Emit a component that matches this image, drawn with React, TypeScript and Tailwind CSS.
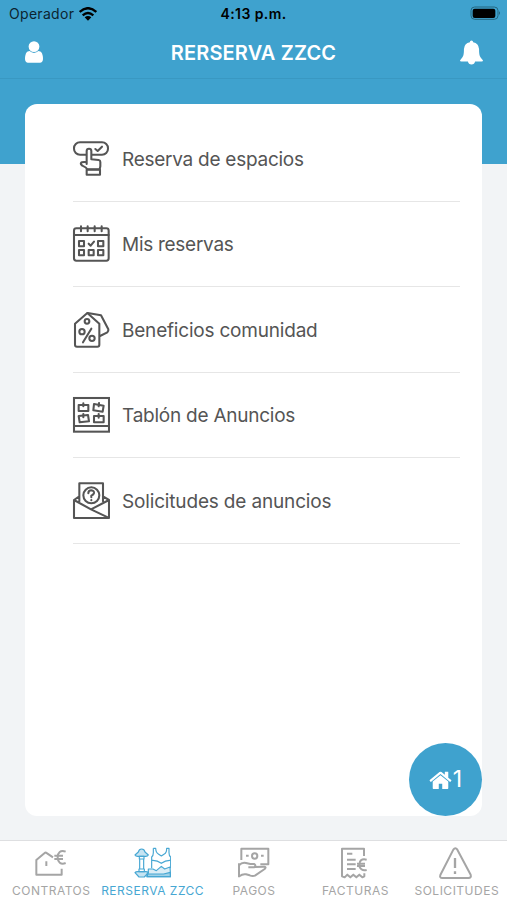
import type { ReactNode } from "react";

interface IconProps {
  children: ReactNode;
}

interface Tab {
  label: string;
  icon: ReactNode;
  active?: boolean;
}

const MenuIcon = ({ children }: IconProps) => (
  <svg
    viewBox="0 0 114 114"
    className="h-[38px] w-[38px] shrink-0 fill-none stroke-[#555555] stroke-[6.2]"
    strokeLinejoin="round"
    strokeLinecap="round"
  >
    {children}
  </svg>
);

const TabIcon = ({ children }: IconProps) => (
  <svg
    viewBox="0 0 114 102"
    className="h-[34px] w-[38px] fill-none stroke-current stroke-[6]"
    strokeLinejoin="round"
  >
    {children}
  </svg>
);

const menuItems = [
  {
    label: "Reserva de espacios",
    tracking: "tracking-[-0.26px]",
    icon: (
      <MenuIcon>
        <rect x="6" y="7" width="102" height="37" rx="18" />
        <path
          className="fill-white"
          d="M44 72V33Q44 26 51 26Q58 26 58 33V58L80 60Q85 61 85 66V79Q84 83 83 88H46Q43 82 31 77L27 73Q25 69 30 67Q36 65 44 67"
        />
        <rect x="44" y="89" width="40" height="15" />
        <path d="M70 27l7 6 13-13" />
      </MenuIcon>
    ),
  },
  {
    label: "Mis reservas",
    tracking: "tracking-[-0.28px]",
    icon: (
      <MenuIcon>
        <rect x="6" y="10" width="104" height="97" rx="7" />
        <path d="M6 30h104M27 4v15M47 4v15M68 4v15M89 4v15" />
        <path d="M21 48h15v16H21zM78 48h16v16H78zM21 75h15v16H21zM50 75h15v16H50zM78 75h16v16H78z" />
        <path d="M50 56l6 6 10-12" />
      </MenuIcon>
    ),
  },
  {
    label: "Beneficios comunidad",
    tracking: "tracking-[-0.2px]",
    icon: (
      <MenuIcon>
        <path d="M46 6L9 38V101Q9 107 15 107H76Q82 107 82 101V38Z" />
        <path d="M47 6L87 13L109 55Q110 60 106 64L84 75" />
        <circle cx="45" cy="31" r="7" />
        <circle cx="30" cy="62" r="8" />
        <circle cx="60" cy="82" r="8" />
        <path d="M58 53L33 94" />
      </MenuIcon>
    ),
  },
  {
    label: "Tablón de Anuncios",
    tracking: "tracking-[-0.24px]",
    icon: (
      <MenuIcon>
        <rect x="6" y="6" width="105" height="101" strokeLinejoin="miter" />
        <path d="M6 90h105" />
        <path d="M20 27h29v18H20zM66 24l29 5-3 18-28-4zM20 60l28-3 3 19-28 3zM66 60h29v19H66z" />
        <path d="M34 22v9M81 21l-1 10M34 54v10M80 54v11" />
      </MenuIcon>
    ),
  },
  {
    label: "Solicitudes de anuncios",
    tracking: "tracking-[-0.16px]",
    icon: (
      <MenuIcon>
        <path d="M22 58V4H93V58M22 43L6 54V108H111V54L93 43M6 54L57 82L111 54M57 82L109 107" />
        <circle cx="58" cy="40" r="24" />
        <path d="M49 34Q49 25 58 25Q67 26 66 33Q65 38 58 41V46M58 54v1" />
      </MenuIcon>
    ),
  },
];

const tabs: Tab[] = [
  {
    label: "CONTRATOS",
    icon: (
      <TabIcon>
        <path d="M63 34L42 20Q40 19 38 21L13 42V86H89V68M43 46v14" />
        <path d="M101 17C85 11 77 20 77 34S86 57 101 51M67 29h26M67 39h26" />
      </TabIcon>
    ),
  },
  {
    label: "RERSERVA ZZCC",
    active: true,
    icon: (
      <TabIcon>
        <g className="stroke-[3.5]">
          <path d="M6 27L16 18Q18 9 26 9T36 18L46 27Q44 31 38 31H14Q8 31 6 27Z" className="fill-current/30" />
          <path d="M19 31H33V39H19ZM20 39H32V69H20ZM18 69H34V77H18Z" />
          <path d="M6 80Q8 77 14 77H38Q44 77 46 80L34 93H18Z" className="fill-current/30" />
          <path d="M61 7V20Q61 29 56 33V67M113 67V33Q108 29 108 20V7H101Q101 21 94 24L85 30L76 24Q69 21 68 7H61M101 7H108" />
          <path d="M57 43Q72 42 85 52Q98 42 113 43" />
          <path className="fill-current/20" d="M46 69H60L70 74L85 61L95 69L111 63L113 92H42L46 80Z" />
          <path className="fill-current/40" d="M42 84H92L112 79V92H42Z" />
        </g>
      </TabIcon>
    ),
  },
  {
    label: "PAGOS",
    icon: (
      <TabIcon>
        <path d="M22 42V8H103V55H79" />
        <circle cx="62" cy="30" r="8" />
        <path d="M36 29h8M81 29h8M15 52V94M15 58Q24 48 36 51L49 54H60Q66 56 63 62L60 64H43M63 63L91 62Q98 63 92 69L64 88Q57 92 47 88L36 85Q26 83 16 91" />
      </TabIcon>
    ),
  },
  {
    label: "FACTURAS",
    icon: (
      <TabIcon>
        <path d="M84 30V8H18V91l8 3 8-8 9 8 9-8 9 8 9-8 9 8 6-3V82" />
        <path d="M33 23h16M33 41h26M33 55h26M33 69h26M92 41C77 37 70 44 70 56S79 76 92 72M63 53h24M63 60h24" />
      </TabIcon>
    ),
  },
  {
    label: "SOLICITUDES",
    icon: (
      <TabIcon>
        <path d="M49 11Q55 3 61 11L101 86Q104 96 94 96H16Q7 96 10 87Z" />
        <path className="stroke-[7]" d="M54 36V66M54 76v8" />
      </TabIcon>
    ),
  },
];

function StatusBar() {
  return (
    <div className="grid h-7 grid-cols-3 items-center pr-[6px] pb-px pl-[9px] text-black">
      <div className="flex items-center gap-[5px]">
        <span className="text-[14px] tracking-[0.3px] text-[#0c2430]">Operador</span>
        <svg viewBox="0 0 54 42" className="h-[14px] w-[18px] fill-none stroke-black stroke-[7]">
          <path d="M2 15Q27 -8 52 15M11 25Q27 11 43 25" />
          <path d="M27 41L17 31Q27 23 37 31Z" className="fill-black stroke-none" />
        </svg>
      </div>
      <span className="-ml-[3px] text-center text-[14px] font-semibold tracking-[0.4px] whitespace-nowrap">
        4:13 p.m.
      </span>
      <svg viewBox="0 0 93 45" className="h-[15px] w-[31px] justify-self-end">
        <rect x="3" y="3" width="81" height="37" rx="11" className="fill-none stroke-[#246780] stroke-[3]" />
        <rect x="8" y="8" width="68" height="28" rx="6" />
        <path d="M87 16q6 5 0 11z" className="fill-[#246780]" />
      </svg>
    </div>
  );
}

function Header() {
  return (
    <header className="flex h-[51px] items-center justify-between border-b border-[#3998c2] pr-[25px] pl-[25px] text-white">
      <svg viewBox="0 0 1280 1536" className="mb-0.5 h-[22px] w-[18px] fill-current">
        <path d="M1280 1271q0 109-62.5 187t-150.5 78h-854q-88 0-150.5-78t-62.5-187q0-85 8.5-160.5t31.5-152 58.5-131 94-89 134.5-34.5q131 128 313 128t313-128q76 0 134.5 34.5t94 89 58.5 131 31.5 152 8.5 160.5zm-256-887q0 159-112.5 271.5t-271.5 112.5-271.5-112.5-112.5-271.5 112.5-271.5 271.5-112.5 271.5 112.5 112.5 271.5z" />
      </svg>
      <h1 className="pl-1 text-[20px] font-semibold tracking-[0.15px]">RERSERVA ZZCC</h1>
      <svg viewBox="0 0 70 75" className="-mr-px mb-0.5 h-[25px] w-[23px] fill-current">
        <path d="M30 6Q30 1 35 1T40 6Q57 9 58 27C58 46 60 51 69 60Q72 65 66 65H46Q44 74 35 74T24 65H4Q-2 65 1 60C10 51 12 46 12 27Q13 9 30 6Z" />
      </svg>
    </header>
  );
}

function TabBar() {
  return (
    <nav className="grid h-[60px] grid-cols-5 border-t border-[#dedfe1] bg-white">
      {tabs.map((tab) => (
        <div
          key={tab.label}
          className={`flex flex-col items-center pt-[5px] ${tab.active ? "text-[#47a7d3]" : "text-[#a5a5a5]"}`}
        >
          {tab.icon}
          <span className="mt-[3px] ml-px text-[12px] leading-4 tracking-[0.5px] whitespace-nowrap">{tab.label}</span>
        </div>
      ))}
    </nav>
  );
}

export default function App() {
  return (
    <div className="flex h-[900px] w-full flex-col bg-[#f2f4f6] font-[Inter,sans-serif]">
      <div className="h-[164px] shrink-0 bg-[#3fa2ce]">
        <StatusBar />
        <Header />
      </div>
      <main className="relative mx-[25px] -mt-[60px] mb-6 flex-1 rounded-xl bg-white pt-3 pr-[22px] pl-12">
        {menuItems.map((item) => (
          <div key={item.label} className="flex h-[85.5px] items-center gap-3 border-b border-[#e6e6e6]">
            <div className="-ml-px pt-px">{item.icon}</div>
            <span className={`pt-[3px] text-[19px] whitespace-nowrap text-[#555555] ${item.tracking}`}>
              {item.label}
            </span>
          </div>
        ))}
        <button className="absolute right-0 bottom-0 flex size-[73px] items-center justify-center gap-px rounded-full bg-[#3fa2ce] text-white">
          <svg viewBox="0 0 1664 1408" className="h-[19px] w-[23px] fill-current">
            <path d="M1408 864v480q0 26-19 45t-45 19h-384v-384h-256v384h-384q-26 0-45-19t-19-45v-480q0-1 .5-3t.5-3l575-474 575 474q1 2 1 6zm223-69l-62 74q-8 9-21 11h-3q-13 0-21-7l-692-577-692 577q-12 8-24 7-13-2-21-11l-62-74q-8-10-7-23.5t11-21.5l719-599q32-26 76-26t76 26l244 204v-195q0-14 9-23t23-9h192q14 0 23 9t9 23v408l219 182q10 8 11 21.5t-7 23.5z" />
          </svg>
          <span className="text-[23px]">1</span>
        </button>
      </main>
      <TabBar />
    </div>
  );
}
